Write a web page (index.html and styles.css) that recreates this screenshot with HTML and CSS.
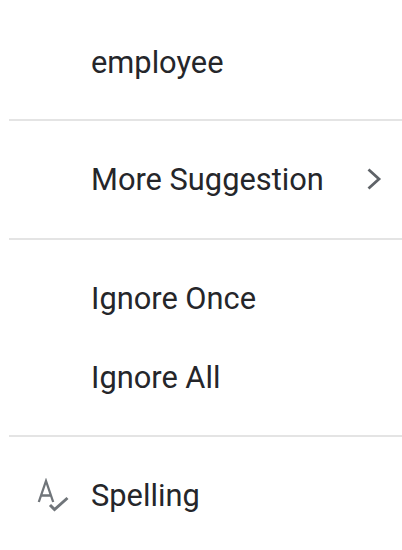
FILE: index.html
```html
<!DOCTYPE html>
<html lang="en">
<head>
<meta charset="utf-8">
<title>Spelling menu</title>
<link rel="stylesheet" href="styles.css">
</head>
<body>
<div class="menu">
  <div class="item first">employee</div>
  <div class="sep"></div>
  <div class="item single"><span class="label">More Suggestion</span>
    <svg class="chev" width="16" height="24" viewBox="0 0 16 24"><path d="M2.500 2.500L13 12 2.500 21.500" fill="none" stroke="#5f6368" stroke-width="2.800"/></svg>
  </div>
  <div class="sep"></div>
  <div class="item ignore1">Ignore Once</div>
  <div class="item ignore2">Ignore All</div>
  <div class="sep"></div>
  <div class="item last">
    <svg class="spell" width="32" height="34" viewBox="0 0 32 34"><path d="M1.800 24L9 3L16.200 24M4 17.500H14" fill="none" stroke="#70757a" stroke-width="2.300"/><path d="M13 27L17.500 31.500L30.500 20" fill="none" stroke="#70757a" stroke-width="3"/></svg>
    <span>Spelling</span>
  </div>
</div>
</body>
</html>
```
FILE: styles.css
```css
html, body { margin: 0; padding: 0; background: #fff; }
body { width: 402px; height: 550px; overflow: hidden; font-family: Roboto, "Liberation Sans", sans-serif; }
.menu { padding-left: 9px; }
.item { position: relative; display: flex; align-items: center; padding-left: 82px; font-size: 30.8px; color: #25262a; height: 40px; }
.first { padding-top: 42px; padding-bottom: 37px; }
.single { padding-top: 38px; padding-bottom: 39px; justify-content: space-between; padding-right: 20px; }
.ignore1 { padding-top: 38px; padding-bottom: 1px; }
.ignore2 { padding-top: 38px; padding-bottom: 38px; }
.last { padding-top: 38px; padding-bottom: 1px; }
.sep { height: 2px; background: #e4e4e4; }
.spell { position: absolute; left: 28px; }
```
